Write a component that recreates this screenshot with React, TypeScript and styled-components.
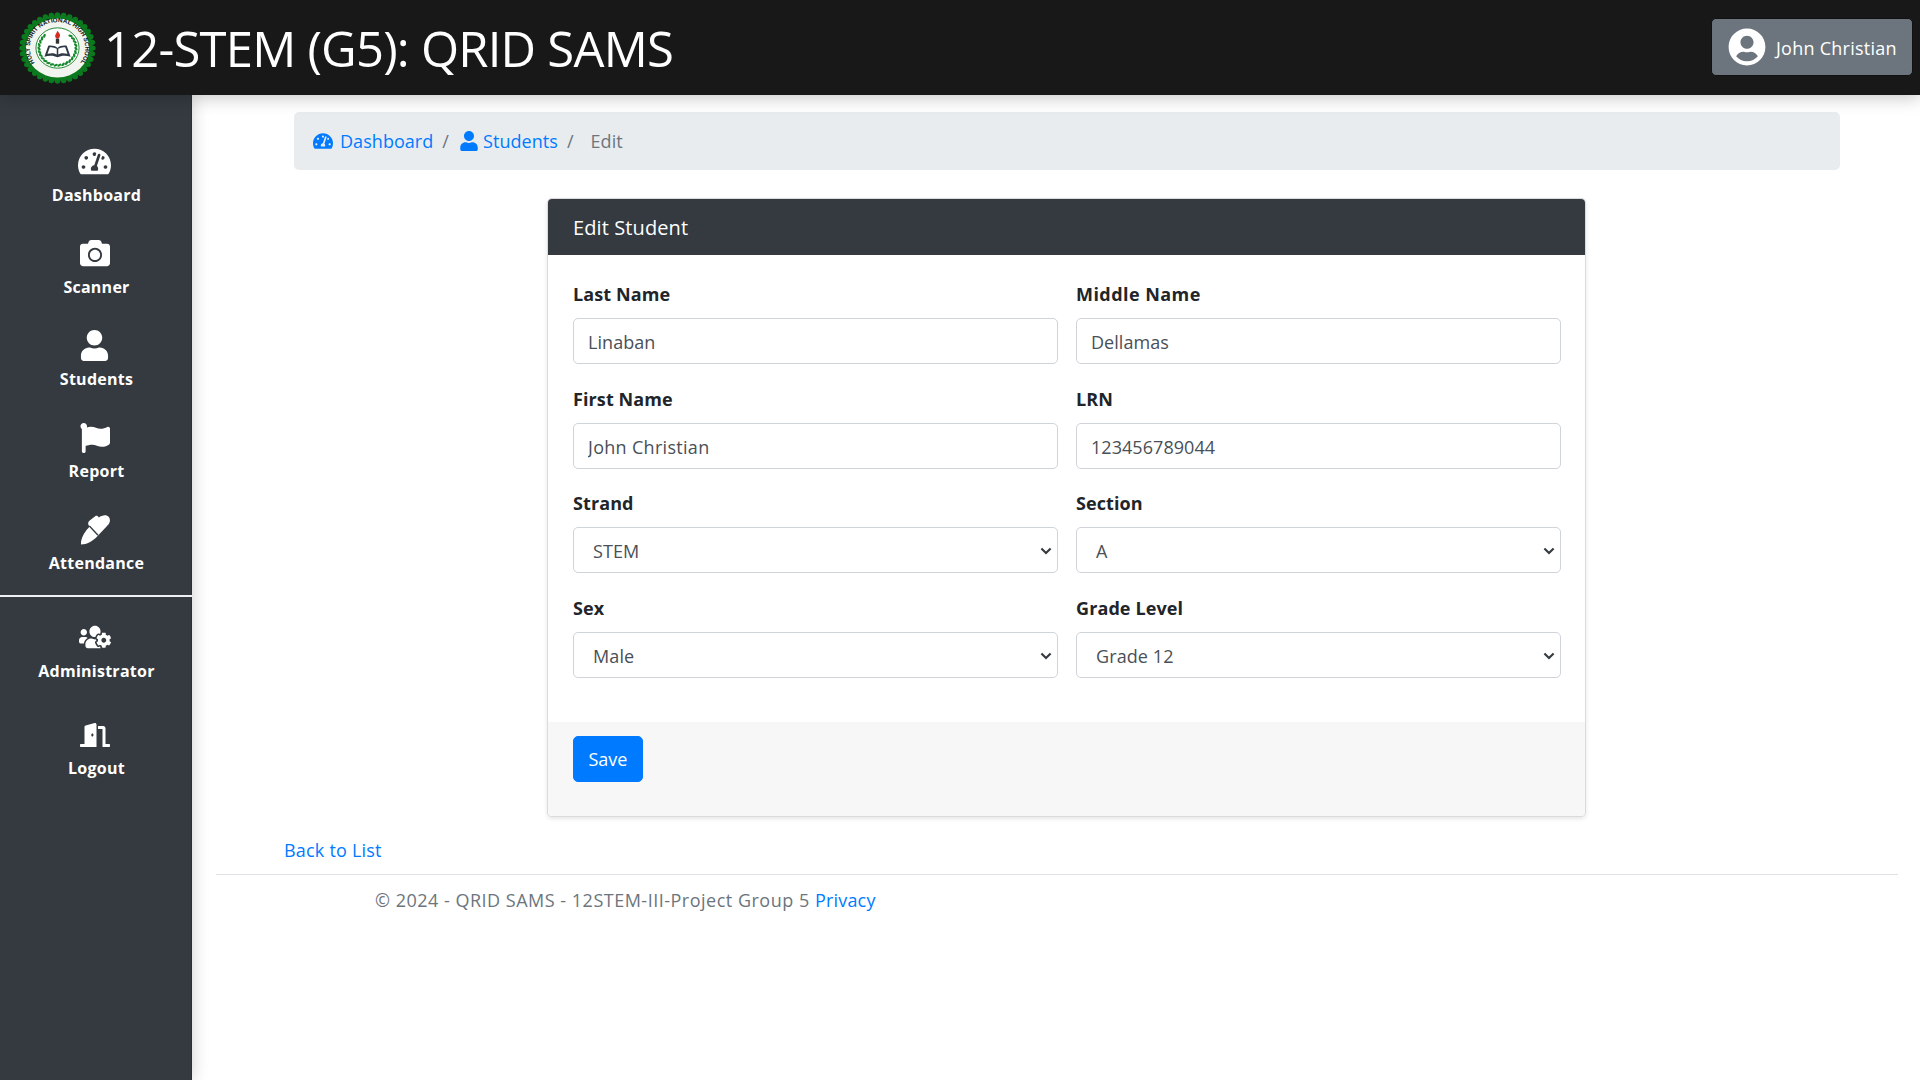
import React from "react";
import styled, { createGlobalStyle } from "styled-components";
import {
  FaTachometerAlt,
  FaCamera,
  FaUser,
  FaFlag,
  FaUsersCog,
  FaDoorOpen,
  FaUserCircle,
} from "react-icons/fa";

const Global = createGlobalStyle`
  * { box-sizing: border-box; }
  html, body { margin: 0; padding: 0; height: 100%; background: #fff; }
  body { font-family: "Open Sans", "Noto Sans", sans-serif; color: #212529; font-size: 18px; }
  #root { height: 100%; }
`;

const Page = styled.div`
  display: grid;
  grid-template-rows: 95px 985px;
  height: 1080px;
  overflow: hidden;
`;

const Navbar = styled.header`
  display: flex;
  align-items: center;
  justify-content: space-between;
  padding: 0 7px 0 19px;
  background: #181818;
  position: relative;
  z-index: 2;
  box-shadow: 0 3px 16px rgba(0, 0, 0, 0.22);
`;

const Brand = styled.div`
  display: flex;
  align-items: center;
  gap: 8px;
`;

const Title = styled.h1`
  margin: 2px 0 0;
  font-size: 49px;
  font-weight: 400;
  line-height: 1;
  color: #fff;
  letter-spacing: -0.78px;
  white-space: nowrap;
`;

const UserButton = styled.button`
  display: flex;
  align-items: center;
  gap: 10px;
  width: 202px;
  height: 58px;
  margin-top: -1px;
  padding: 0 0 0 16px;
  border: 1px solid #111;
  border-radius: 5px;
  background: #6c757d;
  color: #fff;
  font: 400 18px "Open Sans", sans-serif;
  letter-spacing: 0.25px;
  svg { font-size: 38px; flex: none; }
`;

const UserName = styled.span`
  padding-top: 2px;
`;

const Shell = styled.div`
  display: grid;
  grid-template-columns: 192px 1fr;
  min-height: 0;
`;

const Sidebar = styled.nav`
  background: #343a40;
  padding-top: 53px;
  box-shadow: 0 0 16px rgba(0, 0, 0, 0.2);
  position: relative;
  z-index: 1;
  border-right: 1px solid #2a3036;
`;

const SideGroup = styled.div`
  display: flex;
  flex-direction: column;
`;

const SideItem = styled.a<{ $h: number }>`
  display: flex;
  flex-direction: column;
  align-items: center;
  justify-content: flex-start;
  height: ${(p) => p.$h}px;
  padding-left: 2px;
  color: #fff;
  font-size: 16px;
  font-weight: 700;
  letter-spacing: 0.25px;
  line-height: 22px;
  text-decoration: none;
`;

const SideIcon = styled.span<{ $size: number; $lift?: number }>`
  display: flex;
  align-items: center;
  justify-content: center;
  height: 27px;
  margin-top: ${(p) => -(p.$lift ?? 0)}px;
  margin-bottom: ${(p) => 9 + (p.$lift ?? 0)}px;
  margin-left: -4px;
  font-size: ${(p) => p.$size}px;
`;

const SideDivider = styled.hr`
  margin: 0 -1px 27px 0;
  border: 0;
  border-top: 2px solid #eef0f2;
`;

const Main = styled.main`
  padding: 17px 22px 0 24px;
  min-width: 0;
`;

const Breadcrumb = styled.ol`
  display: flex;
  align-items: center;
  list-style: none;
  height: 58px;
  margin: 0 58px 0 78px;
  padding: 0 0 0 19px;
  background: #e9ecef;
  border-radius: 5px;
  font-size: 18px;
  letter-spacing: 0.05px;
`;

const Crumb = styled.li`
  display: flex;
  align-items: center;
  color: #6c757d;
`;

const CrumbLink = styled.a<{ $gap: number }>`
  display: flex;
  align-items: center;
  gap: ${(p) => p.$gap}px;
  color: #007bff;
  text-decoration: none;
  svg { font-size: 20px; }
`;

const CrumbSep = styled.span`
  margin: 0 10px 0 9px;
  color: #6c757d;
`;

const CrumbCurrent = styled.span`
  margin-left: 7px;
  color: #6c757d;
`;

const Card = styled.section`
  width: 1039px;
  margin: 28px 0 0 331px;
  background: #fff;
  border: 1px solid rgba(0, 0, 0, 0.14);
  border-radius: 5px;
  box-shadow: 0 2px 4px rgba(0, 0, 0, 0.1);
  overflow: hidden;
`;

const CardHeader = styled.div`
  display: flex;
  align-items: center;
  height: 56px;
  padding: 0 25px;
  background: #343a40;
  color: #fff;
  font-size: 20px;
  letter-spacing: 0.1px;
`;

const CardBody = styled.div`
  display: grid;
  grid-template-columns: 485px 485px;
  column-gap: 18px;
  row-gap: 12.67px;
  padding: 24px 25px 0;
  height: 467px;
  align-content: start;
`;

const Field = styled.div`
  display: flex;
  flex-direction: column;
  height: 92px;
`;

const Label = styled.label<{ $spacing?: number }>`
  height: 32px;
  margin-bottom: 7px;
  font-size: 18px;
  line-height: 30px;
  font-weight: 700;
  letter-spacing: ${(p) => p.$spacing ?? 0.1}px;
  color: #212529;
`;

const Input = styled.input<{ $spacing?: number }>`
  height: 46px;
  padding: 2px 14px 0;
  border: 1px solid #ced4da;
  border-radius: 5px;
  background: #fff;
  color: #495057;
  font: 400 18px "Open Sans", sans-serif;
  letter-spacing: ${(p) => p.$spacing ?? 0.05}px;
  outline: none;
`;

const chevron =
  "data:image/svg+xml;utf8,<svg xmlns='http://www.w3.org/2000/svg' width='12' height='8' viewBox='0 0 12 8'><path d='M1.4 1.4 6 6 10.6 1.4' fill='none' stroke='%23343a40' stroke-width='2.1'/></svg>";

const Select = styled.select`
  appearance: none;
  height: 46px;
  padding: 2px 24px 0 19px;
  border: 1px solid #ced4da;
  border-radius: 5px;
  background: #fff url("${chevron}") no-repeat right 5px top 19px;
  color: #495057;
  font: 400 18px "Open Sans", sans-serif;
  letter-spacing: 0.1px;
  outline: none;
`;

const CardFooter = styled.div`
  height: 94px;
  padding: 14px 25px;
  background: #f7f7f7;
`;

const SaveButton = styled.button`
  width: 70px;
  height: 46px;
  border: 1px solid #007bff;
  border-radius: 5px;
  background: #007bff;
  color: #fff;
  font: 400 18px "Open Sans", sans-serif;
  letter-spacing: 0;
`;

const BackRow = styled.div`
  margin: 19px 0 0 68px;
  line-height: 28px;
  font-size: 18px;
  letter-spacing: 0.2px;
`;

const TextLink = styled.a`
  color: #007bff;
  text-decoration: none;
`;

const Rule = styled.hr`
  margin: 10px 0 0;
  border: 0;
  border-top: 1px solid #dee2e6;
`;

const Footer = styled.footer`
  margin: 11px 0 0 159px;
  line-height: 28px;
  font-size: 18px;
  letter-spacing: 0.5px;
  color: #6c757d;
`;

const FooterLink = styled(TextLink)`
  letter-spacing: 0.2px;
`;

const LogoSvg = styled.svg`
  width: 77px;
  height: 72px;
  flex: none;
`;

function PenIcon() {
  return (
    <svg width="1em" height="1em" viewBox="0 0 30 30" aria-hidden="true">
      <path
        d="M1 29.5C.6 24 4 17.5 8.2 13.2L9.6 11.6 8.4 9.8C7.8 8 8.4 6.4 10 5.2L15.2 1.2C16.6.4 18 .9 18.8 2.6 21 .7 24 -.2 26.6.4 29.4 1.2 30.6 4.4 29.6 7.2 29 8.8 28 10 26.8 11.2L17.6 21C12.6 26.4 7 29.4 1 29.5Z"
        fill="currentColor"
      />
      <path d="M9.4 11 18 20.2" stroke="#343a40" strokeWidth="1.3" fill="none" />
    </svg>
  );
}

function Logo() {
  const scallops = Array.from({ length: 36 }, (_, i) => {
    const a = (i / 36) * Math.PI * 2;
    return <circle key={i} cx={50 + 46 * Math.cos(a)} cy={50 + 46 * Math.sin(a)} r={3.6} fill="#0b7a1f" />;
  });
  const leaves = Array.from({ length: 24 }, (_, i) => {
    const ang = Math.PI * (-0.25 + (i / 23) * 1.5);
    const cx = 50 + 24 * Math.cos(ang);
    const cy = 50 + 24 * Math.sin(ang);
    return (
      <ellipse
        key={i}
        cx={cx}
        cy={cy}
        rx={3}
        ry={1.6}
        fill="#14882a"
        transform={`rotate(${(ang * 180) / Math.PI + 60} ${cx} ${cy})`}
      />
    );
  });
  return (
    <LogoSvg viewBox="0 0 100 100" preserveAspectRatio="none" aria-label="Holy Spirit National High School seal">
      <circle cx="50" cy="50" r="46" fill="#0b7a1f" />
      {scallops}
      <circle cx="50" cy="50" r="41" fill="#f2f5ef" />
      <circle cx="50" cy="50" r="28" fill="#fff" stroke="#0b7a1f" strokeWidth="1.2" />
      <path id="sealArc" d="M 30 80 A 36 36 0 1 1 70 80" fill="none" />
      <text fontSize="8.3" fontWeight="700" fill="#111" fontFamily='"Liberation Sans", sans-serif'>
        <textPath href="#sealArc" startOffset="50%" textAnchor="middle">
          HOLY SPIRIT NATIONAL HIGH SCHOOL
        </textPath>
      </text>
      {leaves}
      <path d="M50 26c3 4 4 6 3 8-.5 2-1.6 3-3 3s-2.6-1-3-3c-.6-2 1.5-4 3-8z" fill="#d92a20" />
      <rect x="47.8" y="37" width="4.4" height="7" fill="#333" />
      <path d="M33 62l5-15c4-1 9 0 12 3 3-3 8-4 12-3l5 15c-6-2-12-2-17 1-5-3-11-3-17-1z" fill="#2f3a46" />
      <path d="M37 58l3-9c3-.6 6 .2 9 2v8c-3-2-7-2-12-1zM63 58l-3-9c-3-.6-6 .2-9 2v8c3-2 7-2 12-1z" fill="#fff" />
    </LogoSvg>
  );
}

const items = [
  { icon: <FaTachometerAlt />, size: 33, lift: 0, label: "Dashboard", h: 92 },
  { icon: <FaCamera />, size: 30, lift: 1, label: "Scanner", h: 92 },
  { icon: <FaUser />, size: 31, lift: 0, label: "Students", h: 92 },
  { icon: <FaFlag />, size: 30, lift: 0, label: "Report", h: 92 },
  { icon: <PenIcon />, size: 30, lift: 0, label: "Attendance", h: 79 },
];

export default function App() {
  return (
    <Page>
      <Global />
      <Navbar>
        <Brand>
          <Logo />
          <Title>12-STEM (G5): QRID SAMS</Title>
        </Brand>
        <UserButton>
          <FaUserCircle />
          <UserName>John Christian</UserName>
        </UserButton>
      </Navbar>
      <Shell>
        <Sidebar>
          <SideGroup>
            {items.map((it) => (
              <SideItem key={it.label} $h={it.h}>
                <SideIcon $size={it.size} $lift={it.lift}>
                  {it.icon}
                </SideIcon>
                {it.label}
              </SideItem>
            ))}
          </SideGroup>
          <SideDivider />
          <SideGroup>
            <SideItem $h={97}>
              <SideIcon $size={32} $lift={1}>
                <FaUsersCog />
              </SideIcon>
              Administrator
            </SideItem>
            <SideItem $h={90}>
              <SideIcon $size={30}>
                <FaDoorOpen />
              </SideIcon>
              Logout
            </SideItem>
          </SideGroup>
        </Sidebar>
        <Main>
          <Breadcrumb>
            <Crumb>
              <CrumbLink $gap={7}>
                <FaTachometerAlt />
                Dashboard
              </CrumbLink>
              <CrumbSep>/</CrumbSep>
            </Crumb>
            <Crumb>
              <CrumbLink $gap={4}>
                <FaUser />
                Students
              </CrumbLink>
              <CrumbSep>/</CrumbSep>
            </Crumb>
            <Crumb>
              <CrumbCurrent>Edit</CrumbCurrent>
            </Crumb>
          </Breadcrumb>
          <Card>
            <CardHeader>Edit Student</CardHeader>
            <CardBody>
              <Field>
                <Label>Last Name</Label>
                <Input defaultValue="Linaban" />
              </Field>
              <Field>
                <Label $spacing={0.45}>Middle Name</Label>
                <Input defaultValue="Dellamas" />
              </Field>
              <Field>
                <Label>First Name</Label>
                <Input $spacing={0.3} defaultValue="John Christian" />
              </Field>
              <Field>
                <Label>LRN</Label>
                <Input defaultValue="123456789044" />
              </Field>
              <Field>
                <Label>Strand</Label>
                <Select defaultValue="STEM">
                  <option>STEM</option>
                </Select>
              </Field>
              <Field>
                <Label>Section</Label>
                <Select defaultValue="A">
                  <option>A</option>
                </Select>
              </Field>
              <Field>
                <Label>Sex</Label>
                <Select defaultValue="Male">
                  <option>Male</option>
                </Select>
              </Field>
              <Field>
                <Label>Grade Level</Label>
                <Select defaultValue="Grade 12">
                  <option>Grade 12</option>
                </Select>
              </Field>
            </CardBody>
            <CardFooter>
              <SaveButton>Save</SaveButton>
            </CardFooter>
          </Card>
          <BackRow>
            <TextLink>Back to List</TextLink>
          </BackRow>
          <Rule />
          <Footer>
            © 2024 - QRID SAMS - 12STEM-III-Project Group 5 <FooterLink>Privacy</FooterLink>
          </Footer>
        </Main>
      </Shell>
    </Page>
  );
}
